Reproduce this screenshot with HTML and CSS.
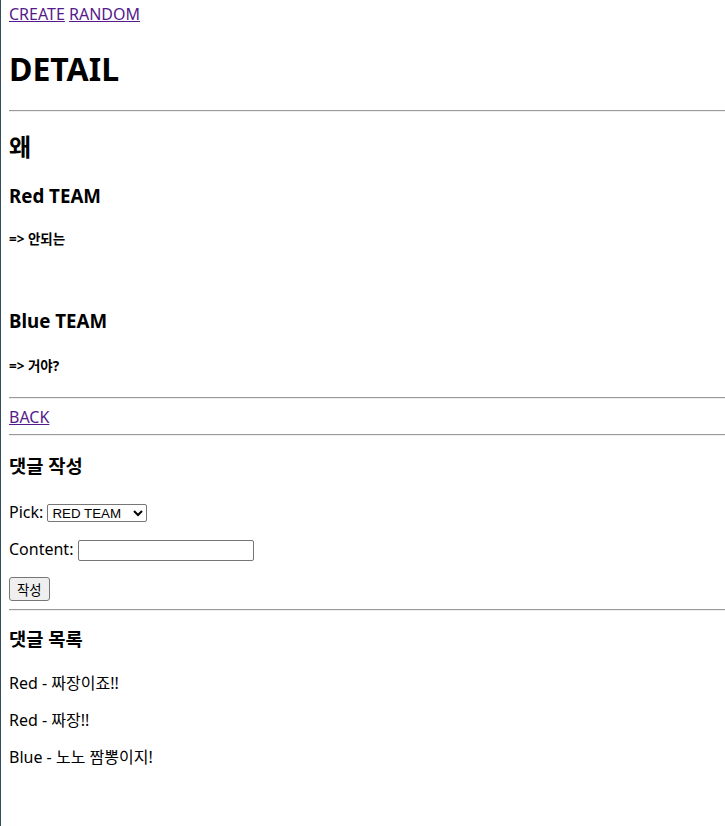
FILE: index.html
```html
<!DOCTYPE html>
<html lang="ko">
<head>
<meta charset="utf-8">
<title>DETAIL</title>
<link rel="stylesheet" href="styles.css">
</head>
<body>
<div class="nav"><a href="#">CREATE</a> <a href="#">RANDOM</a></div>
<h1 class="title">DETAIL</h1>
<hr class="rule rule-top">
<h2 class="question">왜</h2>
<h3 class="team">Red TEAM</h3>
<h6 class="answer">=&gt; 안되는</h6>
<div class="spacer"></div>
<h3 class="team">Blue TEAM</h3>
<h6 class="answer answer-last">=&gt; 거야?</h6>
<hr class="rule">
<div class="back"><a href="#">BACK</a></div>
<hr class="rule rule-after-back">
<h3 class="section">댓글 작성</h3>
<form class="form">
  <p class="field">Pick: <select class="pick"><option>RED TEAM</option><option>BLUE TEAM</option></select></p>
  <p class="field">Content: <input class="content" type="text"></p>
  <button class="submit" type="button">작성</button>
</form>
<hr class="rule rule-after-form">
<h3 class="section section-list">댓글 목록</h3>
<p class="comment">Red - 짜장이죠!!</p>
<p class="comment">Red - 짜장!!</p>
<p class="comment">Blue - 노노 짬뽕이지!</p>
</body>
</html>
```
FILE: styles.css
```css
html {
  border-left: 1px solid #2f4d5e;
  min-height: 100%;
}
body {
  margin: 0 0 0 8px;
  font-family: "Noto Sans", "Noto Sans CJK KR", sans-serif;
  font-size: 16px;
  line-height: 21px;
  color: #000;
}
a { color: #551a8b; }
.nav { padding-top: 4px; }
.title {
  font-size: 32px;
  line-height: 42px;
  margin: 23px 0 20px;
}
.rule {
  margin: 8px 0;
  border: 0;
  border-top: 1px solid #9a9a9a;
  border-bottom: 1px solid #eeeeee;
  height: 0;
}
.rule-top { margin-top: 0; }
.rule-after-back { margin-top: 6px; }
.rule-after-form { margin-top: 8px; }
.question {
  font-size: 24px;
  line-height: 32px;
  margin: 19px 0 20px;
}
.team {
  font-size: 18.72px;
  line-height: 25px;
  margin: 19px 0;
}
.answer {
  font-size: 13.5px;
  line-height: 17px;
  margin: 23px 0 24px;
}
.answer-last { margin: 25px 0 22px; }
.spacer { height: 17px; }
.back {
  line-height: 21px;
  margin-top: 1px;
}
.section {
  font-size: 18.72px;
  line-height: 25px;
  margin: 17px 0 24px;
}
.section-list { margin: 15px 0 22px; }
.field { margin: 16px 0; }
.pick {
  font-family: "Liberation Sans", Arial, sans-serif;
  font-size: 13.33px;
  width: 100px;
  height: 18px;
  border: 1px solid #767676;
  border-radius: 2px;
  background: #fff;
  color: #000;
}
.content {
  width: 170px;
  height: 17px;
  font-size: 13.33px;
  border: 1px solid #767676;
  border-radius: 2px;
}
.submit {
  font-family: "Noto Sans CJK KR", sans-serif;
  font-size: 13.33px;
  height: 24px;
  padding: 0 7px;
  background: #efefef;
  border: 1px solid #767676;
  border-radius: 3px;
  color: #000;
}
.comment { margin: 16px 0; }
```
